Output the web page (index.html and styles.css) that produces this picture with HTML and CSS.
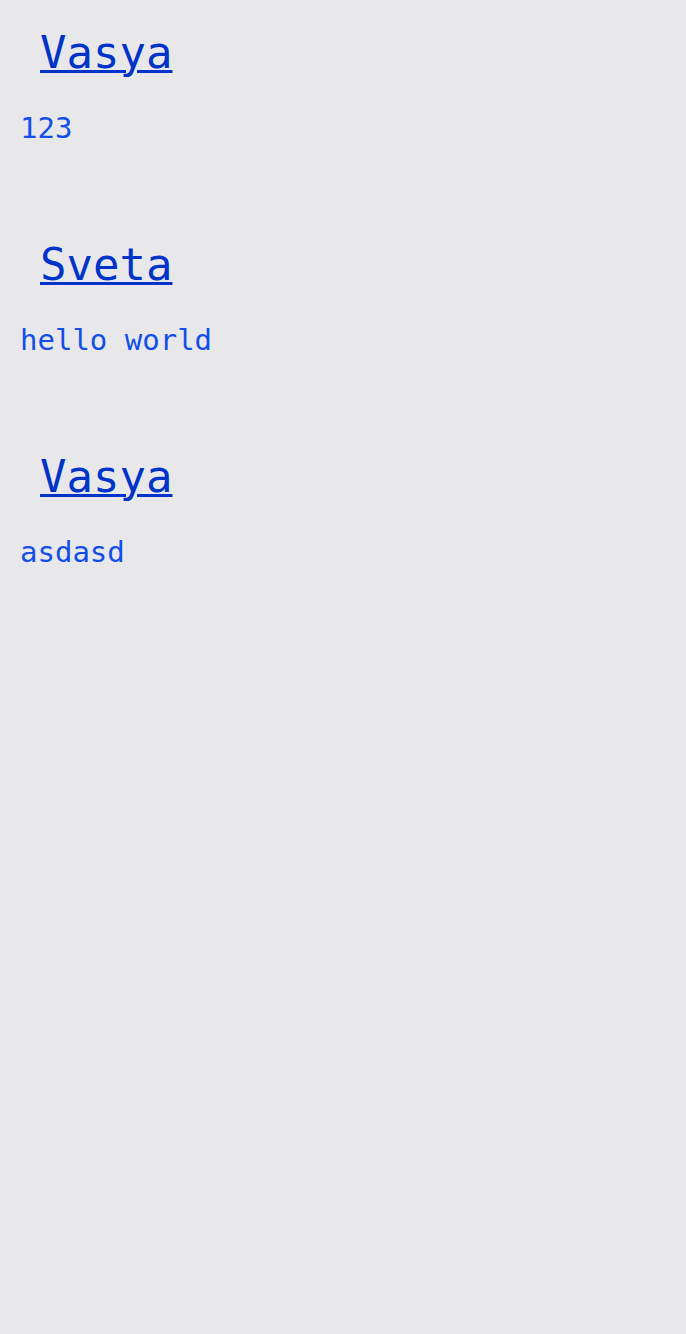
FILE: index.html
```html
<!DOCTYPE html>
<html>
<head>
<meta charset="utf-8">
<link rel="stylesheet" href="styles.css">
</head>
<body>
<div class="list">
  <div class="post">
    <h2 class="author"><a href="#">Vasya</a></h2>
    <p class="text">123</p>
  </div>
  <div class="post">
    <h2 class="author"><a href="#">Sveta</a></h2>
    <p class="text">hello world</p>
  </div>
  <div class="post">
    <h2 class="author"><a href="#">Vasya</a></h2>
    <p class="text">asdasd</p>
  </div>
</div>
</body>
</html>
```
FILE: styles.css
```css
html, body {
  margin: 0;
  background: #e8e8ea;
}
body {
  font-family: "DejaVu Sans Mono", monospace;
  min-height: 1334px;
}
.list {
  display: flex;
  flex-direction: column;
  gap: 93px;
  padding: 27px 0 0 20px;
}
.author {
  margin: 0;
  padding-left: 20px;
  font-size: 44px;
  font-weight: normal;
  line-height: 52px;
}
.author a {
  color: #0033c8;
  text-decoration: underline;
  text-decoration-thickness: 3px;
}
.text {
  margin: 31px 0 0;
  font-size: 29px;
  line-height: 36px;
  color: #124ee8;
}
```
